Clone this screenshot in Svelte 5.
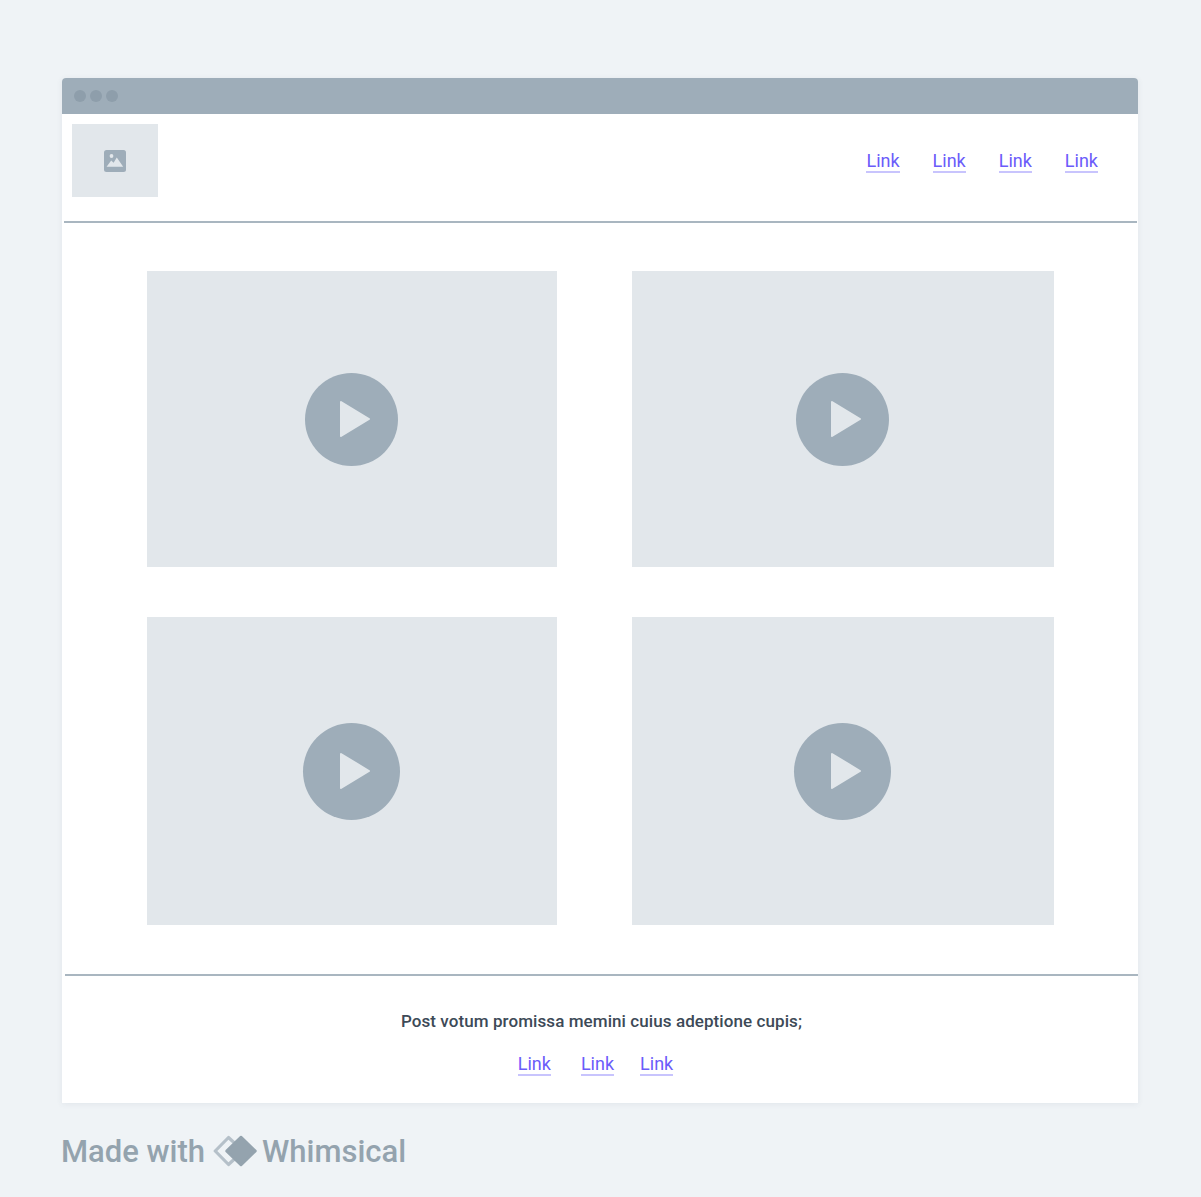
<script>
	const videos = [
		{ size: 93 },
		{ size: 93 },
		{ size: 97 },
		{ size: 97 }
	];
	const navLinks = ['Link', 'Link', 'Link', 'Link'];
</script>

<div class="page">
	<div class="window">
		<div class="titlebar">
			<span class="dot"></span>
			<span class="dot"></span>
			<span class="dot"></span>
		</div>

		<header class="header">
			<div class="logo">
				<svg width="22" height="22" viewBox="0 0 22 22">
					<rect width="22" height="22" rx="2.5" fill="#9eadb9" />
					<circle cx="7.5" cy="6" r="1.9" fill="#e2e7eb" />
					<path d="M2.6 16.8 L7.2 10.4 L9.6 12.8 L12.8 7.6 L19.2 16.8 Z" fill="#e2e7eb" />
				</svg>
			</div>
			<nav class="nav">
				{#each navLinks as link}
					<a href="#top" class="link">{link}</a>
				{/each}
			</nav>
		</header>

		<main class="grid">
			{#each videos as video}
				<div class="video">
					<div class="play" style="width: {video.size}px; height: {video.size}px;">
						<svg width="32" height="38" viewBox="0 0 32 38">
							<path
								d="M2 2 L30 19 L2 36 Z"
								fill="#e2e7eb"
								stroke="#e2e7eb"
								stroke-width="2"
								stroke-linejoin="round"
							/>
						</svg>
					</div>
				</div>
			{/each}
		</main>

		<footer class="footer">
			<p class="tagline">Post votum promissa memini cuius adeptione cupis;</p>
			<div class="footer-links">
				<a href="#top" class="link">Link</a>
				<a href="#top" class="link second">Link</a>
				<a href="#top" class="link third">Link</a>
			</div>
		</footer>
	</div>

	<div class="credit">
		<span>Made with</span>
		<svg class="mark" width="44" height="32" viewBox="0 0 44 32">
			<path
				d="M22 8.5 L15.5 2.5 L2.2 16 L15.5 29.5 L22 23.5"
				fill="none"
				stroke="#b5c0c9"
				stroke-width="3.2"
				stroke-linejoin="round"
			/>
			<path
				d="M28 2 L42.5 16 L28 30 L13.5 16 Z"
				fill="#94a3ae"
				stroke="#94a3ae"
				stroke-width="2.5"
				stroke-linejoin="round"
			/>
		</svg>
		<span>Whimsical</span>
	</div>
</div>

<style>
	:global(body) {
		margin: 0;
		background: #eff3f6;
		font-family: 'Roboto', 'Liberation Sans', sans-serif;
	}

	.page {
		display: flex;
		flex-direction: column;
		height: 1197px;
		padding: 78px 63px 0 62px;
		box-sizing: border-box;
	}

	.window {
		background: #fff;
		height: 1025px;
		border-radius: 4px 4px 0 0;
		box-shadow: 0 1px 6px rgba(60, 80, 100, 0.08);
		display: flex;
		flex-direction: column;
	}

	.titlebar {
		height: 36px;
		flex: none;
		background: #9eadb9;
		border-radius: 4px 4px 0 0;
		display: flex;
		align-items: center;
		gap: 4px;
		padding-left: 12px;
	}

	.dot {
		width: 12px;
		height: 12px;
		border-radius: 50%;
		background: #8e9eab;
	}

	.header {
		height: 109px;
		flex: none;
		box-sizing: border-box;
		margin: 0 1px 0 2px;
		border-bottom: 2px solid #a9b6c0;
		display: flex;
		justify-content: space-between;
		padding: 10px 39px 0 8px;
	}

	.logo {
		width: 86px;
		height: 73px;
		background: #e2e7eb;
		display: flex;
		align-items: center;
		justify-content: center;
	}

	.nav {
		display: flex;
		gap: 33px;
		height: 75px;
		align-items: center;
	}

	.link {
		color: #6b5cfa;
		font-size: 18px;
		line-height: 20px;
		text-decoration: none;
		border-bottom: 2px solid #c8c4fd;
		display: block;
	}

	.grid {
		display: grid;
		grid-template-columns: 410px 422px;
		grid-template-rows: 296px 308px;
		column-gap: 75px;
		row-gap: 50px;
		padding: 48px 0 49px 85px;
	}

	.video {
		background: #e2e7eb;
		display: flex;
		align-items: center;
		justify-content: center;
	}

	.play {
		border-radius: 50%;
		background: #9eadb9;
		display: flex;
		align-items: center;
		justify-content: center;
		margin-right: 2px;
	}

	.play svg {
		margin-left: 7px;
	}

	.footer {
		margin-left: 3px;
		border-top: 2px solid #a9b6c0;
		flex: 1;
		text-align: center;
	}

	.tagline {
		margin: 34px 0 0;
		font-size: 17px;
		font-weight: 500;
		letter-spacing: 0.08px;
		line-height: 22px;
		color: #3d4a57;
	}

	.footer-links {
		display: flex;
		justify-content: center;
		margin-top: 22px;
		margin-left: -12px;
	}

	.second {
		margin-left: 30px;
	}

	.third {
		margin-left: 26px;
	}

	.credit {
		display: flex;
		align-items: center;
		height: 32px;
		margin-top: 32px;
		margin-left: -1px;
		font-size: 31px;
		font-weight: 500;
		color: #94a3ae;
		gap: 10px;
	}

	.mark {
		flex: none;
		margin: 0 -5px 0 -2px;
	}
</style>
